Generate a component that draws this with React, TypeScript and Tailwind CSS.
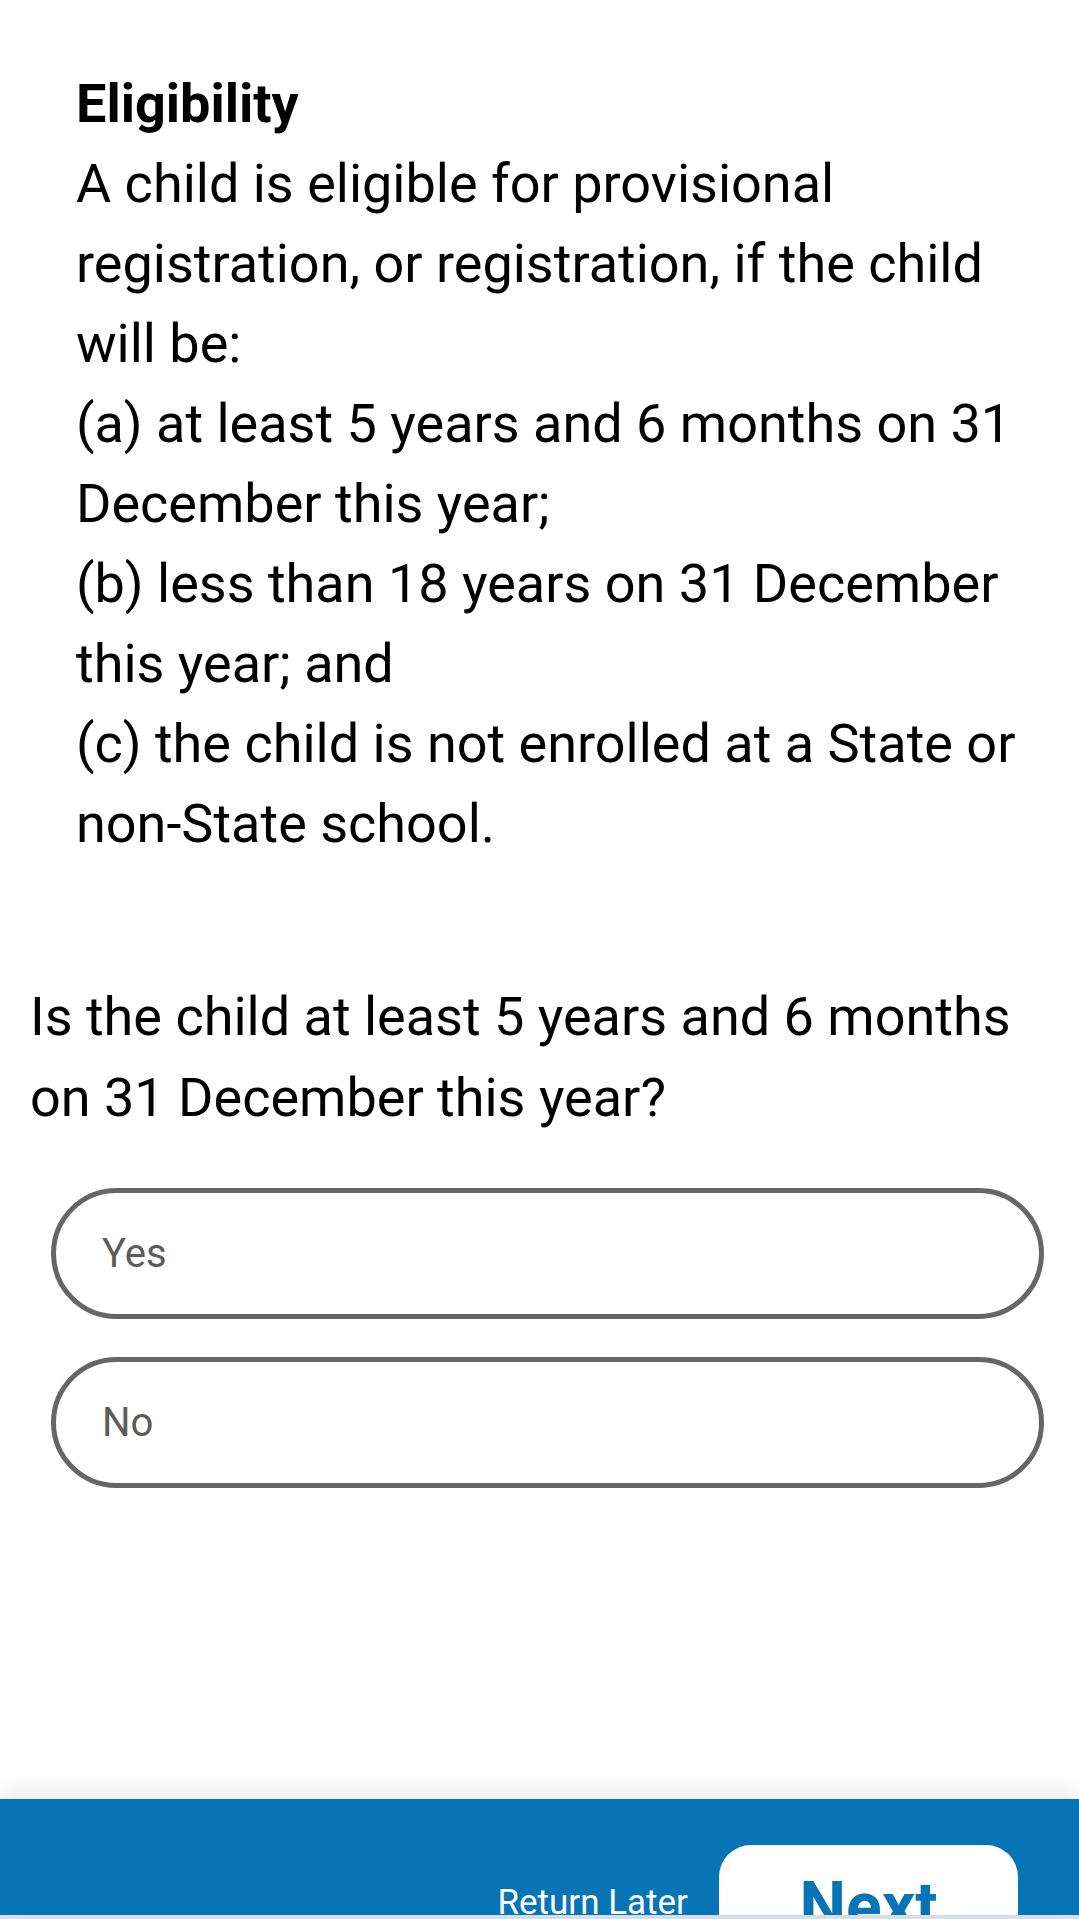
export default function App() {
  const body = [
    'A child is eligible for provisional registration, or registration, if the child will be:',
    '(a) at least 5 years and 6 months on 31 December this year;',
    '(b) less than 18 years on 31 December this year; and',
    '(c) the child is not enrolled at a State or non-State school.',
  ];

  return (
    <div
      className="flex h-[1919px] w-full flex-col overflow-hidden bg-white text-black"
      style={{ fontFamily: 'Roboto, "Noto Sans", sans-serif' }}
    >
      <main className="flex-1">
        {/* eligibility info */}
        <section className="pl-[76px] pr-[30px] pt-[64px] text-[54px] leading-[80px]">
          <h2 className="font-bold">Eligibility</h2>
          {body.map((line) => (
            <p key={line}>{line}</p>
          ))}
        </section>

        {/* question */}
        <h3 className="mt-[112px] pl-[30px] pr-[30px] text-[54px] leading-[81px]">
          Is the child at least 5 years and 6 months on 31 December this year?
        </h3>

        <div className="ml-[51px] mr-[35px] mt-[50px] flex flex-col gap-[38px]">
          {['Yes', 'No'].map((opt) => (
            <button
              key={opt}
              className="flex h-[131px] w-full items-center rounded-full border-[5px] border-[#666666] bg-white pl-[46px] text-left text-[40px] text-[#5c5c5c]"
            >
              {opt}
            </button>
          ))}
        </div>
      </main>

      {/* bottom action bar */}
      <footer className="relative h-[116px] overflow-hidden bg-[#0774b5] shadow-[0_-6px_22px_rgba(0,0,0,0.10)]">
        <div className="flex items-start justify-end pr-[61px] pt-[46px]">
          <span className="mr-[31px] mt-[40px] text-[35px] leading-none text-white">Return Later</span>
          <button className="flex h-[120px] w-[299px] items-start justify-center rounded-t-[32px] bg-white pt-[29px] text-[66px] font-bold leading-none text-[#0774b5]">
            Next
          </button>
        </div>
      </footer>
      <div className="h-[4px] bg-[#dde5ea]" />
    </div>
  );
}
